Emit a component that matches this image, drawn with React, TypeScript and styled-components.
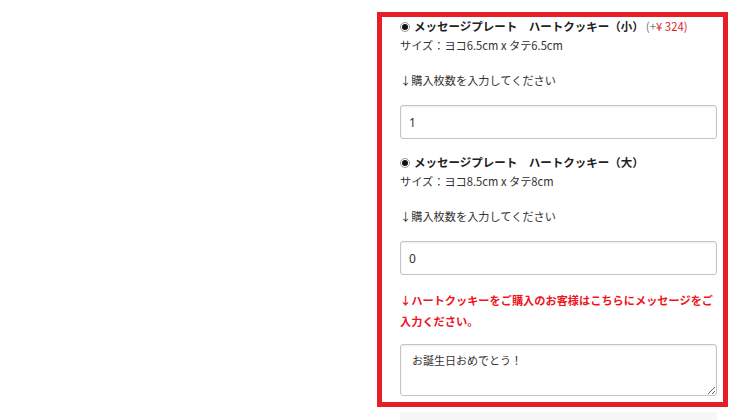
import React from 'react';
import styled, {createGlobalStyle} from 'styled-components';

const Global = createGlobalStyle`
  html, body {
    margin: 0;
    padding: 0;
    background: #fff;
  }
  body {
    font-family: "Noto Sans CJK JP", "Noto Sans", sans-serif;
    color: #333;
  }
`;

const Page = styled.div`
  display: grid;
  grid-template-columns: 377px 351px;
  padding-top: 12px;
  height: 408px;
  overflow: hidden;
`;

const Options = styled.div`
  border: 5px solid #e61e25;
  padding: 0 6px 6px 18px;
  display: flex;
  flex-direction: column;
`;

const Option = styled.div`
  display: flex;
  flex-direction: column;
  margin-bottom: 14px;
`;

const Title = styled.div`
  font-size: 11.5px;
  line-height: 19px;
  font-weight: bold;
  color: #222;
  display: flex;
  align-items: center;
  white-space: pre;
`;

const Radio = styled.span`
  width: 8px;
  height: 8px;
  border-radius: 50%;
  border: 1px solid #999;
  background: #fff;
  margin-right: 4px;
  position: relative;

  &::after {
    content: '';
    position: absolute;
    left: 1px;
    top: 1px;
    width: 6px;
    height: 6px;
    border-radius: 50%;
    background: #111;
  }
`;

const Price = styled.span`
  font-weight: normal;
  font-size: 11.4px;
  color: #777;
  margin-left: 2px;

  > em {
    font-style: normal;
    color: #d8262c;
  }
`;

const Line = styled.div<{$gap?: number}>`
  font-size: 11.2px;
  line-height: 19px;
  color: #333;
  margin-top: ${p => p.$gap || 0}px;
`;

const Field = styled.input`
  box-sizing: border-box;
  width: 317px;
  height: 34px;
  margin-top: 15px;
  border: 1px solid #c4c4c4;
  border-radius: 3px;
  box-shadow: inset 0 1px 2px rgba(0, 0, 0, 0.08);
  padding: 0 8px;
  font-family: "Noto Sans", "Noto Sans CJK JP", sans-serif;
  font-size: 12px;
  color: #333;
  outline: none;
`;

const Notice = styled.p`
  margin: 1px 0 0;
  font-size: 11.2px;
  line-height: 21px;
  font-weight: bold;
  color: #f0141e;
`;

const Message = styled.textarea`
  box-sizing: border-box;
  width: 317px;
  height: 52px;
  margin-top: 12px;
  border: 1px solid #c4c4c4;
  border-radius: 3px;
  box-shadow: inset 0 1px 2px rgba(0, 0, 0, 0.08);
  padding: 6px 11px;
  font-family: "Noto Sans CJK JP", sans-serif;
  font-size: 11px;
  line-height: 18px;
  color: #333;
  outline: none;
`;

const NextField = styled.div`
  margin: 5px 0 0 23px;
  width: 317px;
  height: 10px;
  background: #f7f7f7;
`;

const items = [
  {name: 'ハートクッキー（小）', size: 'サイズ：ヨコ6.5cm x タテ6.5cm', price: '¥ 324', qty: '1'},
  {name: 'ハートクッキー（大）', size: 'サイズ：ヨコ8.5cm x タテ8cm', price: '', qty: '0'},
];

function App() {
  return (
    <>
      <Global/>
      <Page>
        <div/>
        <div>
          <Options>
            {items.map(item =>
              <Option key={item.name}>
                <Title>
                  <Radio/>
                  {'メッセージプレート　' + item.name}
                  {item.price && <Price>(+<em>{item.price})</em></Price>}
                </Title>
                <Line>{item.size}</Line>
                <Line $gap={16}>↓購入枚数を入力してください</Line>
                <Field defaultValue={item.qty}/>
              </Option>
            )}
            <Notice>↓ハートクッキーをご購入のお客様はこちらにメッセージをご入力ください。</Notice>
            <Message defaultValue="お誕生日おめでとう！"/>
          </Options>
          <NextField/>
        </div>
      </Page>
    </>
  );
}

export default App;
